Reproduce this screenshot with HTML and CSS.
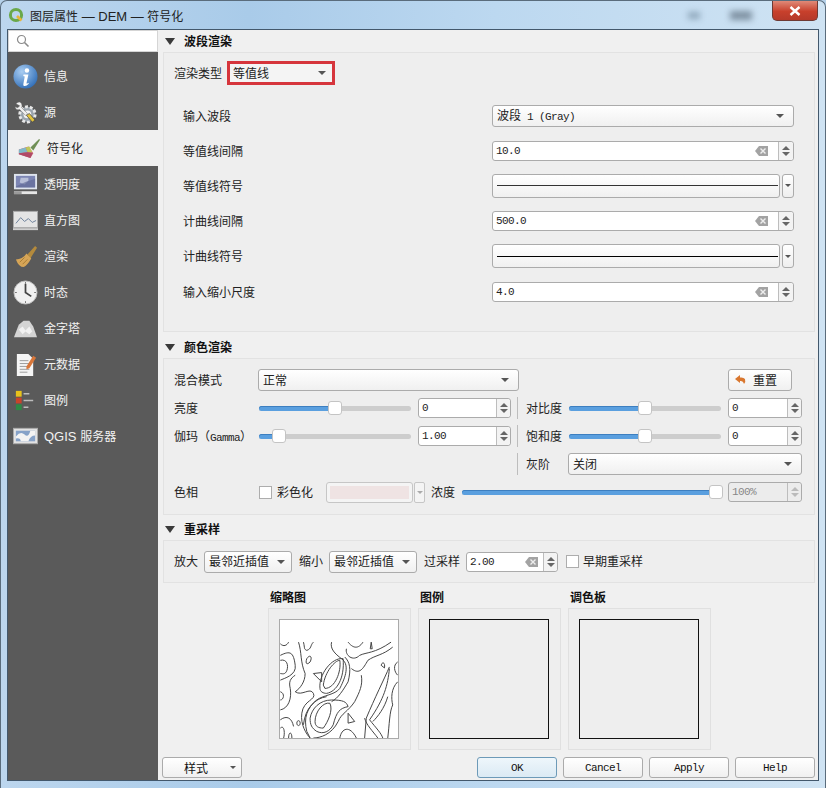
FILE: index.html
```html
<!DOCTYPE html>
<html lang="zh-CN">
<head>
    <meta charset="UTF-8">
    <title>图层属性 — DEM — 符号化</title>
    <link rel="stylesheet" href="styles.css">
</head>
<body>
<svg class="defs" width="0" height="0">
    <defs>
        <symbol id="clear" viewBox="0 0 13 10"><path d="M4 0h9v10H4L0 5z" fill="#a3a3a3"/><path d="M5.5 2.5l5 5m0-5l-5 5" stroke="#eee" stroke-width="1.4"/></symbol>
    </defs>
</svg>
<div class="window">
    <div class="titlebar">
        <svg class="app-icon" viewBox="0 0 16 16"><circle cx="8" cy="8" r="5.6" fill="none" stroke="#6aa84a" stroke-width="3"/><path d="M9 9l4.5 4.5" stroke="#e8b63a" stroke-width="2.6"/></svg>
        <span class="title">图层属性<span class="latin"> — DEM — </span>符号化</span>
        <span class="caption-blur"></span>
        <span class="caption-blur wide"></span>
        <div class="close"><svg viewBox="0 0 12 10" width="12" height="10"><path d="M1.5 1l9 8m0-8l-9 8" stroke="#fff" stroke-width="2.4"/></svg></div>
    </div>
    <div class="client">
        <div class="sidebar">
            <div class="search">
                <svg viewBox="0 0 14 14" width="14" height="14"><circle cx="5.5" cy="5.5" r="4" fill="none" stroke="#8a8a8a" stroke-width="1.2"/><path d="M8.5 8.5l4 4" stroke="#8a8a8a" stroke-width="1.6"/></svg>
            </div>
            <ul class="nav">
                <li class="nav-item">
                    <svg viewBox="0 0 26 26"><defs><radialGradient id="blue" cx="35%" cy="30%" r="80%"><stop offset="0" stop-color="#a9cdf2"/><stop offset="1" stop-color="#2a69b4"/></radialGradient></defs><circle cx="13" cy="13" r="12.5" fill="url(#blue)"/><circle cx="14.5" cy="6.8" r="2.3" fill="#fff"/><path d="M11 11h5l-2 9q0 1 2-.5l.4 1Q13 24 11 22.500q-.6-1 0-3l1.200-6.500-1.600-.5z" fill="#fff"/></svg>
                    <span>信息</span>
                </li>
                <li class="nav-item">
                    <svg viewBox="0 0 26 26"><circle cx="15" cy="15" r="8" fill="#9aa4ad" stroke="#e8e8e8" stroke-width="3" stroke-dasharray="3 2"/><circle cx="15" cy="15" r="4" fill="#f2f2f2"/><path d="M3 4q4-4 6 0 1 3 0 4l6 6-2 2-6-6q-4 1-5-3l3 1 2-2z" fill="#f0f0f0" stroke="#666" stroke-width=".5"/><path d="M14 16l6 7 3-2-6-7z" fill="#e2c23c" stroke="#333" stroke-width=".7"/></svg>
                    <span>源</span>
                </li>
                <li class="nav-item selected">
                    <svg viewBox="0 0 26 26"><path d="M3 14l10-3 5 7-3 5-12-4z" fill="#c65f78"/><path d="M3 14l7-2 2 5-9 1z" fill="#7fb9c9"/><path d="M10 12l4-1 3 6-5 0z" fill="#bfc75a"/><path d="M3 18l9-1 5 1-2 5-12-4z" fill="#b04a66"/><path d="M15 12l9-9 1 1-7 11z" fill="#6f8f55"/></svg>
                    <span>符号化</span>
                </li>
                <li class="nav-item">
                    <svg viewBox="0 0 26 26"><rect x="1" y="2" width="24" height="16" fill="#dfe5ee"/><rect x="3" y="4" width="20" height="12" fill="#7d86b4"/><path d="M8 6h8v3l-4 4-5-2z" fill="#b8bfd8"/><path d="M3 15q9-5 20-8v9H3z" fill="#5e6792" opacity=".6"/><rect x="1" y="20" width="24" height="3" fill="#e6e6e6"/><rect x="1" y="20" width="8" height="3" fill="#9a9a9a"/></svg>
                    <span>透明度</span>
                </li>
                <li class="nav-item">
                    <svg viewBox="0 0 26 26"><rect x=".5" y="3.500" width="25" height="17" fill="#e4e4e4" stroke="#aaa"/><path d="M3 16l5-6 4 4 4-3 4 4 4-2" fill="none" stroke="#6b7f99"/><rect y="21" width="26" height="2" fill="#cfcfcf"/></svg>
                    <span>直方图</span>
                </li>
                <li class="nav-item">
                    <svg viewBox="0 0 26 26"><path d="M15 11l8-9 2 2-7 11z" fill="#b48a3c"/><path d="M3 16q7 0 11-6l5 5q-4 7-8 9-5 0-8-8z" fill="#d6a557"/><path d="M7 19l5-5m-2 7l5-5" stroke="#a87c34"/></svg>
                    <span>渲染</span>
                </li>
                <li class="nav-item">
                    <svg viewBox="0 0 26 26"><circle cx="13" cy="13" r="12" fill="#f0f0f0" stroke="#bbb"/><path d="M13 4v9l6 4" fill="none" stroke="#444" stroke-width="1.800"/><path d="M13 2v2m0 18v2M2 13h2m18 0h2" stroke="#777"/></svg>
                    <span>时态</span>
                </li>
                <li class="nav-item">
                    <svg viewBox="0 0 26 26"><path d="M1 22l5-13 5-4 6 0 4 6 4 11z" fill="#d4d4d4"/><path d="M6 14l4-3 3 4 4-4 3 5-3 3-4-3-3 3z" fill="#f2f2f2"/></svg>
                    <span>金字塔</span>
                </li>
                <li class="nav-item">
                    <svg viewBox="0 0 26 26"><path d="M4 2h12l5 5v18H4z" fill="#f5f5f5"/><path d="M7 9h9M7 12h10M7 15h10M7 18h10M7 21h8" stroke="#9a9a9a"/><path d="M14 15l7-11 3 2-7 11-3 1z" fill="#d9773a"/></svg>
                    <span>元数据</span>
                </li>
                <li class="nav-item">
                    <svg viewBox="0 0 26 26"><rect x="3" y="3" width="6" height="6" fill="#e8c21a"/><rect x="3" y="10" width="6" height="6" fill="#c8442a"/><rect x="3" y="17" width="6" height="6" fill="#2d8a44"/><path d="M11 6h6M11 13h10M11 20h5" stroke="#bdbdbd" stroke-width="1.600"/></svg>
                    <span>图例</span>
                </li>
                <li class="nav-item">
                    <svg viewBox="0 0 26 26"><rect x=".5" y="4.500" width="25" height="16" fill="#e2e2e2" stroke="#aaa"/><path d="M3 7h20v11H3z" fill="#86a2c8"/><path d="M3 13q5-6 9-2t6-4h5v5q-5 0-7 6H8q0-4-5-3z" fill="#f3f3f3"/></svg>
                    <span><span class="latin">QGIS </span>服务器</span>
                </li>
            </ul>
        </div>
        <div class="main">
            <h3 class="section-head"><i class="tri"></i><span>波段渲染</span></h3>
            <div class="group band-group">
                <div class="type-row">
                    <label>渲染类型</label>
                    <div class="type-combo"><span>等值线</span><i class="arrow"></i></div>
                </div>
                <div class="form-row">
                    <label>输入波段</label>
                    <div class="combo band-combo"><span>波段<span class="mono"> 1 (Gray)</span></span><i class="arrow"></i></div>
                </div>
                <div class="form-row">
                    <label>等值线间隔</label>
                    <div class="spin"><span class="value">10.0</span><svg class="clear"><use href="#clear"/></svg><span class="spin-btn"><i class="up"></i><i class="down"></i></span></div>
                </div>
                <div class="form-row">
                    <label>等值线符号</label>
                    <div class="symbol"><div class="symbol-btn"><hr></div><div class="symbol-drop"><i class="arrow small"></i></div></div>
                </div>
                <div class="form-row">
                    <label>计曲线间隔</label>
                    <div class="spin"><span class="value">500.0</span><svg class="clear"><use href="#clear"/></svg><span class="spin-btn"><i class="up"></i><i class="down"></i></span></div>
                </div>
                <div class="form-row">
                    <label>计曲线符号</label>
                    <div class="symbol"><div class="symbol-btn"><hr class="thick"></div><div class="symbol-drop"><i class="arrow small"></i></div></div>
                </div>
                <div class="form-row">
                    <label>输入缩小尺度</label>
                    <div class="spin"><span class="value">4.0</span><svg class="clear"><use href="#clear"/></svg><span class="spin-btn"><i class="up"></i><i class="down"></i></span></div>
                </div>
            </div>

            <h3 class="section-head head-color"><i class="tri"></i><span>颜色渲染</span></h3>
            <div class="group color-group">
                <label>混合模式</label>
                <div class="combo blend-combo"><span>正常</span><i class="arrow"></i></div>
                <button class="reset"><svg viewBox="0 0 12 12" width="12" height="12"><path d="M5 1L0 5l5 4V7q3-.5 4 3 2-2 1-5-1.500-2-5-1.500z" fill="#d9772f"/></svg><span>重置</span></button>

                <label>亮度</label>
                <div class="slider"><div class="fill" style="width:50%"><i class="handle"></i></div></div>
                <div class="spin small left-spin"><span class="value">0</span><span class="spin-btn"><i class="up"></i><i class="down"></i></span></div>
                <i class="sep"></i>
                <label>对比度</label>
                <div class="slider"><div class="fill" style="width:50%"><i class="handle"></i></div></div>
                <div class="spin small"><span class="value">0</span><span class="spin-btn"><i class="up"></i><i class="down"></i></span></div>

                <label class="gamma">伽玛（<span class="mono">Gamma</span>）</label>
                <div class="slider"><div class="fill" style="width:13%"><i class="handle"></i></div></div>
                <div class="spin small left-spin"><span class="value">1.00</span><span class="spin-btn"><i class="up"></i><i class="down"></i></span></div>
                <i class="sep"></i>
                <label>饱和度</label>
                <div class="slider"><div class="fill" style="width:50%"><i class="handle"></i></div></div>
                <div class="spin small"><span class="value">0</span><span class="spin-btn"><i class="up"></i><i class="down"></i></span></div>

                <i class="sep grey-sep"></i>
                <label>灰阶</label>
                <div class="combo grey-combo"><span>关闭</span><i class="arrow"></i></div>

                <label>色相</label>
                <div class="hue-row">
                    <i class="check"></i>
                    <span class="colorize">彩色化</span>
                    <div class="color-btn"><i></i></div>
                    <div class="color-drop"><i class="arrow small pale"></i></div>
                    <span class="strength">浓度</span>
                    <div class="slider long"><div class="fill" style="width:98%"><i class="handle"></i></div></div>
                </div>
                <div class="spin small disabled"><span class="value">100%</span><span class="spin-btn"><i class="up"></i><i class="down"></i></span></div>
            </div>

            <h3 class="section-head head-resample"><i class="tri"></i><span>重采样</span></h3>
            <div class="group resample-group">
                <label>放大</label>
                <div class="combo sample-combo"><span>最邻近插值</span><i class="arrow"></i></div>
                <label>缩小</label>
                <div class="combo sample-combo"><span>最邻近插值</span><i class="arrow"></i></div>
                <label>过采样</label>
                <div class="spin oversample"><span class="value">2.00</span><svg class="clear"><use href="#clear"/></svg><span class="spin-btn"><i class="up"></i><i class="down"></i></span></div>
                <i class="check"></i>
                <label>早期重采样</label>
            </div>

            <div class="previews">
                <div class="preview">
                    <h4>缩略图</h4>
                    <div class="preview-box">
                        <svg class="thumb" viewBox="60 103 355 357">
                            <g fill="none" stroke="#444" stroke-width="3">
                                <path d="M60 210C90 195 100 200 105 240 110 270 70 280 60 285"/>
                                <path d="M60 225C80 220 85 240 80 255 75 270 65 265 60 265"/>
                                <path d="M60 175C70 185 80 180 85 170"/>
                                <path d="M115 170C125 200 120 230 135 265 135 290 120 310 105 320 125 335 150 305 160 325 170 345 130 345 125 385 120 420 140 450 150 460"/>
                                <path d="M60 320C75 325 70 345 60 345"/>
                                <path d="M60 375C85 370 95 340 90 310 85 290 90 280 105 270"/>
                                <path d="M60 405C80 390 95 400 100 425"/>
                                <path d="M130 170C135 190 130 190 140 195 155 190 150 180 160 170"/>
                                <path d="M190 300C195 260 225 225 240 225 245 260 225 310 195 310Z"/>
                                <path d="M180 310C175 270 215 215 250 220 255 280 230 320 200 325 190 325 180 320 180 310Z"/>
                                <path d="M215 170C210 190 225 205 245 220 275 240 250 290 240 310 225 330 190 330 170 345 140 370 130 400 140 440L150 460"/>
                                <path d="M255 215C270 230 275 250 265 290 250 315 235 340 215 350"/>
                                <path d="M260 190C255 210 280 230 300 210 320 200 345 205 395 170"/>
                                <path d="M265 170C285 195 300 185 310 170"/>
                                <path d="M275 250C300 270 310 250 325 225 345 210 370 210 400 185"/>
                                <path d="M165 410C165 380 190 350 210 355 220 375 205 410 190 430 175 430 165 425 165 410Z"/>
                                <path d="M150 400C155 370 180 345 215 345 250 345 260 350 265 365 240 370 230 380 220 420 210 440 190 450 170 440 155 430 150 420 150 400Z"/>
                                <path d="M130 420C135 370 165 340 200 335"/>
                                <path d="M160 460C180 460 215 450 235 410 245 385 265 380 285 350 300 320 310 300 305 270"/>
                                <path d="M390 245C375 280 345 340 320 400L315 460"/>
                                <path d="M390 250C385 300 375 340 330 405 350 430 365 445 370 460"/>
                                <path d="M415 230C400 240 405 260 415 270"/>
                                <path d="M415 290C395 310 395 340 400 360 390 380 390 420 385 460"/>
                                <path d="M365 240C370 225 378 235 375 248Z"/>
                                <path d="M160 265L185 262 185 290Z"/>
                                <path d="M335 170L338 190 332 190Z"/>
                                <path d="M110 415C110 405 120 405 120 415 120 425 110 425 110 415Z"/>
                                <path d="M60 430C70 420 75 440 70 460"/>
                                <path d="M85 460C85 440 95 440 95 460"/>
                                <path d="M265 385L285 410 265 415Z"/>
                                <path d="M240 460C245 430 270 420 290 460"/>
                                <path d="M140 220C150 205 158 215 150 230 140 240 135 235 140 220Z"/>
                                <path d="M315 400C320 420 340 440 355 460"/>
                                <path d="M340 410C355 395 375 370 385 335"/>
                            </g>
                        </svg>
                    </div>
                </div>
                <div class="preview">
                    <h4>图例</h4>
                    <div class="preview-box"><div class="blank"></div></div>
                </div>
                <div class="preview">
                    <h4>调色板</h4>
                    <div class="preview-box"><div class="blank"></div></div>
                </div>
            </div>

            <div class="footer">
                <button class="btn style-btn"><span>样式</span><i class="arrow small"></i></button>
                <div class="footer-right">
                    <button class="btn default">OK</button>
                    <button class="btn">Cancel</button>
                    <button class="btn">Apply</button>
                    <button class="btn">Help</button>
                </div>
            </div>
        </div>
    </div>
</div>
</body>
</html>
```
FILE: styles.css
```css
* { box-sizing: border-box; margin: 0; padding: 0; }
body { width: 826px; height: 788px; overflow: hidden; font-family: "Noto Sans CJK SC", "Liberation Sans", sans-serif; font-size: 12px; color: #222; background: #b5d1ea; }
i { display: block; font-style: normal; }
label { padding-bottom: 2px; }
.defs { position: absolute; }
.latin { font-family: "Liberation Sans", sans-serif; font-size: 13px; }
.mono { font-family: "Liberation Mono", monospace; font-size: 11px; letter-spacing: -0.6px; }

.window { width: 826px; height: 788px; display: flex; flex-direction: column; background: linear-gradient(90deg, #bcd6ee 0%, #a9cbe9 30%, #bcd8f0 60%, #cfe3f3 100%); border-radius: 7px 7px 0 0; border: 1px solid #5a6c7c; border-bottom: none; }
.titlebar { height: 28px; display: flex; align-items: center; padding-left: 7px; flex-shrink: 0; }
.app-icon { width: 16px; height: 16px; margin-right: 6px; }
.title { font-size: 12px; color: #222; flex: 1; }
.caption-blur { width: 12px; height: 7px; background: #8ea6ba; filter: blur(3px); margin-right: 30px; }
.caption-blur.wide { width: 22px; height: 9px; background: #7d90a1; margin-right: 20px; }
.close { width: 46px; height: 20px; margin: -8px 7px 0 0; background: linear-gradient(#e08a78, #c8402c 55%, #b5392a); border: 1px solid #6e3a34; border-top: none; border-radius: 0 0 5px 5px; display: flex; align-items: center; justify-content: center; }

.client { flex: 1; margin: 0 6px 7px; background: #f0f0f0; border: 1px solid #43586c; display: flex; min-height: 0; }
.sidebar { width: 150px; flex-shrink: 0; display: flex; flex-direction: column; background: #5a5a5a; }
.search { height: 22px; background: #fff; display: flex; align-items: center; padding-left: 7px; border: 1px solid #d5d5d5; }
.nav { list-style: none; padding-top: 6px; }
.nav-item { height: 36px; display: flex; align-items: center; gap: 6px; padding-left: 5px; color: #f2f2f2; font-size: 12px; }
.nav-item svg { width: 25px; height: 25px; flex-shrink: 0; }
.nav-item > span { padding-bottom: 2px; }
.nav-item.selected { background: #f0f0f0; color: #222; padding-left: 8px; }

.main { flex: 1; min-width: 0; padding: 0 3px 0 5px; display: flex; flex-direction: column; }
.section-head { height: 22px; font-size: 12px; font-weight: 700; color: #111; display: flex; align-items: center; padding-left: 2px; gap: 9px; flex-shrink: 0; }
.section-head span { padding-bottom: 2px; }
.head-color { height: 26px; padding-top: 4px; }
.head-resample { height: 25px; padding-top: 3px; }
.tri { width: 0; height: 0; border-left: 5px solid transparent; border-right: 5px solid transparent; border-top: 7px solid #3a3a3a; }
.group { border: 1px solid #e2e2e2; background: #eeeeee; flex-shrink: 0; }

.band-group { height: 280px; padding: 8px 20px 0 10px; }
.type-row { display: flex; align-items: center; gap: 5px; height: 24px; margin-bottom: 13px; }
.type-combo { width: 108px; height: 24px; border: 3px solid #d6353c; background: #f4f4f4; display: flex; align-items: center; justify-content: space-between; padding: 0 6px 0 3px; font-size: 12px; }
.type-combo span { padding-bottom: 2px; }
.form-row { display: flex; align-items: center; height: 35.2px; padding-left: 9px; }
.form-row label { width: 309px; flex-shrink: 0; padding-bottom: 1px; }

.combo { height: 22px; border: 1px solid #ababab; border-radius: 3px; background: linear-gradient(#fff, #f0f0f0); display: flex; align-items: center; justify-content: space-between; padding: 0 9px 0 4px; }
.combo > span { padding-bottom: 2px; }
.arrow { width: 0; height: 0; border-left: 4px solid transparent; border-right: 4px solid transparent; border-top: 4px solid #555; }
.arrow.small { border-left-width: 3px; border-right-width: 3px; border-top-width: 3px; }
.arrow.pale { border-top-color: #aaa; }
.band-combo { width: 302px; }

.spin { height: 20px; width: 302px; border: 1px solid #ababab; border-radius: 3px; background: #fff; display: flex; align-items: center; font-family: "Liberation Mono", monospace; font-size: 11px; letter-spacing: -0.6px; }
.value { flex: 1; padding-left: 3px; }
.clear { width: 13px; height: 10px; margin-right: 10px; }
.spin-btn { width: 15px; height: 100%; flex-shrink: 0; border-left: 1px solid #bdbdbd; background: #f3f3f3; border-radius: 0 3px 3px 0; display: flex; flex-direction: column; align-items: center; justify-content: center; gap: 2px; }
.up, .down { width: 0; height: 0; border-left: 4px solid transparent; border-right: 4px solid transparent; }
.up { border-bottom: 4px solid #666; }
.down { border-top: 4px solid #666; }
.spin.small { width: 74px; height: 20px; }
.spin.small .spin-btn { width: 14px; }
.spin.left-spin { width: 93px; }
.spin.disabled { background: #ececec; color: #888; }
.spin.disabled .spin-btn { background: #ececec; }
.spin.disabled .up { border-bottom-color: #bbb; }
.spin.disabled .down { border-top-color: #bbb; }

.symbol { width: 302px; height: 24px; display: flex; gap: 2px; }
.symbol-btn { flex: 1; border: 1px solid #ababab; border-radius: 3px; background: linear-gradient(#fff, #f0f0f0); display: flex; align-items: center; padding: 0 1px 0 4px; }
.symbol-btn hr { width: 100%; border: none; border-top: 1px solid #333; }
.symbol-btn hr.thick { border-top-color: #000; }
.symbol-drop { width: 12px; border: 1px solid #ababab; border-radius: 3px; background: linear-gradient(#fff, #eee); display: flex; align-items: center; justify-content: center; }

.color-group { height: 157px; display: grid; grid-template-columns: 84px 160px 94px 14px 42px 160px 74px; grid-auto-rows: 28px; align-items: center; padding: 7px 0 0 10px; }
.gamma { white-space: nowrap; }
.blend-combo { grid-column: 2 / 4; width: 261px; }
.reset { grid-column: 7; width: 64px; height: 22px; border: 1px solid #ababab; border-radius: 3px; background: linear-gradient(#fff, #f0f0f0); display: flex; align-items: center; gap: 6px; padding-left: 6px; font: inherit; color: inherit; }
.reset span { padding-bottom: 2px; }
.sep { width: 1px; height: 22px; background: #bdbdbd; margin-left: 5px; }
.grey-sep { grid-column: 4; }
.grey-combo { grid-column: 6 / 8; width: 234px; }
.slider { position: relative; width: 152px; height: 5px; margin-left: 1px; background: #cdcdcd; border-radius: 3px; }
.fill { position: relative; height: 100%; background: #5a9fdf; box-shadow: inset 0 1px #3d7fc0; border-radius: 3px; }
.handle { position: absolute; right: -7px; top: -5px; width: 14px; height: 14px; border: 1px solid #c4c4c4; border-radius: 3px; background: #fff; }

.hue-row { grid-column: 2 / 7; display: flex; align-items: center; }
.check { width: 13px; height: 13px; background: #fff; border: 1px solid #adadad; flex-shrink: 0; }
.hue-row .check { margin-left: 1px; }
.colorize { margin-left: 5px; width: 49px; flex-shrink: 0; padding-bottom: 2px; }
.color-btn { width: 87px; height: 21px; border: 1px solid #c6c6c6; border-radius: 3px; background: #f4f4f4; padding: 3px; flex-shrink: 0; }
.color-btn i { height: 100%; background: #efe3e3; }
.color-drop { width: 11px; height: 21px; margin-left: 1px; border: 1px solid #c6c6c6; border-radius: 2px; background: #f4f4f4; display: flex; align-items: center; justify-content: center; flex-shrink: 0; }
.strength { margin-left: 6px; width: 31px; flex-shrink: 0; padding-bottom: 2px; }
.slider.long { width: 259px; margin-left: 0; }

.resample-group { height: 43px; display: flex; align-items: center; padding-left: 10px; }
.sample-combo { width: 88px; margin: 0 7px 0 6px; padding-right: 6px; }
.oversample { width: 92px; margin: 0 8px 0 6px; }
.oversample .clear { margin-right: 5px; }
.oversample .spin-btn { width: 14px; }
.resample-group .check { margin-right: 4px; }

.previews { display: flex; gap: 7px; padding-left: 105px; flex-shrink: 0; }
.preview { width: 143px; }
.preview h4 { height: 25px; padding: 6px 0 0 2px; font-size: 12px; line-height: 16px; font-weight: 700; color: #111; }
.preview-box { height: 142px; padding: 10px; border: 1px solid #e0e0e0; background: #eeeeee; }
.thumb { display: block; width: 120px; height: 120px; background: #fff; border: 1px solid #aaa; }
.blank { width: 120px; height: 120px; background: #eeeeee; border: 1px solid #111; }

.footer { display: flex; justify-content: space-between; padding-top: 7px; margin-left: -1px; }
.footer-right { display: flex; gap: 6px; }
.btn { width: 80px; height: 21px; border: 1px solid #ababab; border-radius: 3px; background: linear-gradient(#fff, #f0f0f0); font-family: "Liberation Mono", monospace; font-size: 11px; letter-spacing: -0.6px; color: #111; }
.btn.default { border-color: #6d9ab8; background: linear-gradient(#eef6fb, #dbeaf4); }
.style-btn { display: flex; align-items: center; justify-content: space-between; padding: 0 5px 0 21px; font-family: "Noto Sans CJK SC", sans-serif; font-size: 12px; letter-spacing: 0; }
```
